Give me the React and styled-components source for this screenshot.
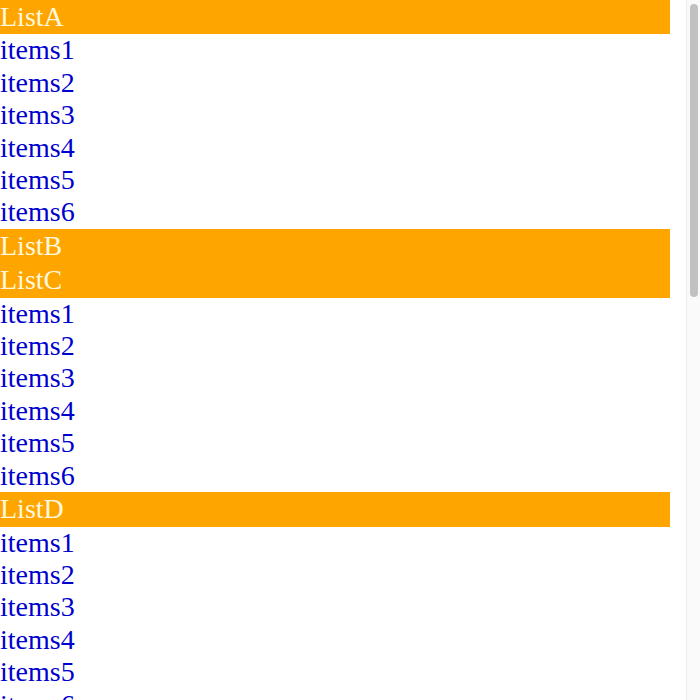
import React from "react";
import styled, { createGlobalStyle } from "styled-components";

const Global = createGlobalStyle`
  html, body { margin: 0; padding: 0; background: #fff; overflow: hidden; }
  body { font-family: "Liberation Serif", "Times New Roman", serif; }
`;

const Page = styled.div`
  display: flex;
  width: 700px;
  height: 700px;
  background: #fff;
`;

const Content = styled.div`
  flex: 1;
  height: 700px;
  overflow: hidden;
`;

const ScrollTrack = styled.div`
  width: 14px;
  height: 700px;
  background: #fafafa;
  border-left: 1px solid #ededed;
  display: flex;
  flex-direction: column;
  align-items: center;
  padding-top: 4px;
  box-sizing: border-box;
`;

const ScrollThumb = styled.div`
  width: 8px;
  height: 293px;
  border-radius: 4px;
  background: #c1c1c1;
`;

const Wrapper = styled.div`
  width: 670px;
  display: flex;
  flex-direction: column;
`;

const Section = styled.section`
  display: flex;
  flex-direction: column;
`;

const Header = styled.div`
  background: #ffa500;
  color: #fff8dc;
  font-size: 28px;
  padding: 1px 0;
  line-height: 32.4px;
`;

const Items = styled.ul`
  list-style: none;
  margin: 0;
  padding: 0;
`;

const Item = styled.li`
  color: #0000cd;
  font-size: 28px;
  line-height: 32.4px;
`;

const lists = [
  { name: "ListA", open: true },
  { name: "ListB", open: false },
  { name: "ListC", open: true },
  { name: "ListD", open: true },
  { name: "ListE", open: true },
  { name: "ListF", open: true },
  { name: "ListG", open: true },
  { name: "ListH", open: true },
];

const items = ["items1", "items2", "items3", "items4", "items5", "items6"];

export default function App() {
  return (
    <>
      <Global />
      <Page>
        <Content>
          <Wrapper>
            {lists.map((l) => (
              <Section key={l.name}>
                <Header>{l.name}</Header>
                {l.open && (
                  <Items>
                    {items.map((it) => (
                      <Item key={it}>{it}</Item>
                    ))}
                  </Items>
                )}
              </Section>
            ))}
          </Wrapper>
        </Content>
        <ScrollTrack>
          <ScrollThumb />
        </ScrollTrack>
      </Page>
    </>
  );
}
